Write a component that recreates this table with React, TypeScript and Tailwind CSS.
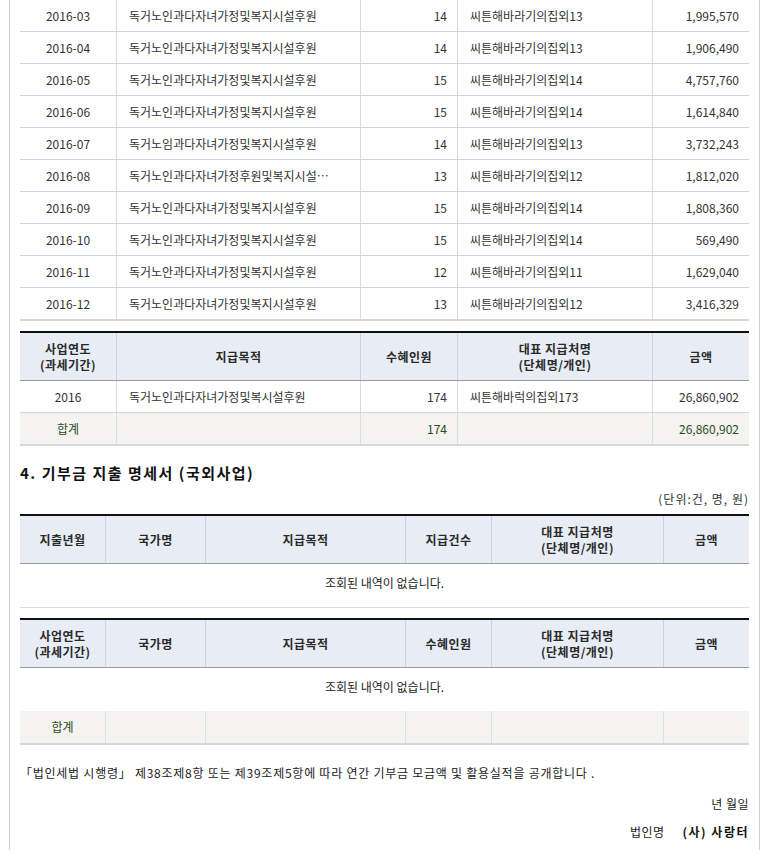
import React from "react";

const FONT = { fontFamily: '"Noto Sans CJK KR", "Noto Sans", sans-serif' };

const rows1 = [
  ["2016-03", "독거노인과다자녀가정및복지시설후원", "14", "씨튼해바라기의집외13", "1,995,570"],
  ["2016-04", "독거노인과다자녀가정및복지시설후원", "14", "씨튼해바라기의집외13", "1,906,490"],
  ["2016-05", "독거노인과다자녀가정및복지시설후원", "15", "씨튼해바라기의집외14", "4,757,760"],
  ["2016-06", "독거노인과다자녀가정및복지시설후원", "15", "씨튼해바라기의집외14", "1,614,840"],
  ["2016-07", "독거노임과다자녀가정및복지시설후원", "14", "씨튼해바라기의집외13", "3,732,243"],
  ["2016-08", "독거노인과다자녀가정후원및복지시설…", "13", "씨튼해바라기의집외12", "1,812,020"],
  ["2016-09", "독거노인과다자녀가정및복지시설후원", "15", "씨튼해바라기의집외14", "1,808,360"],
  ["2016-10", "독거노인과다자녀가정및복지시설후원", "15", "씨튼해바라기의집외14", "569,490"],
  ["2016-11", "독거노안과다자녀가정및복지시설후원", "12", "씨튼해바라기의집외11", "1,629,040"],
  ["2016-12", "독거노인과다자녀가정및복지시설후원", "13", "씨튼해바라기의집외12", "3,416,329"],
];

const G5 = "grid grid-cols-[96px_244px_97px_195px_97px]";
const G6 = "grid grid-cols-[85px_100px_200px_86px_172px_86px]";

function HeadCell({ children, first }: { children: React.ReactNode; first?: boolean }) {
  return (
    <div
      className={
        "flex items-center justify-center text-center font-bold text-[12px] leading-[16px] tracking-[0.5px] text-[#2a2a2a] " +
        (first ? "" : "border-l border-[#c9d2de]")
      }
    >
      {children}
    </div>
  );
}

function Head5() {
  return (
    <div className={G5 + " h-[50px] border-t-2 border-t-[#111] border-b border-b-[#9a9a9a] bg-[#e7ecf5]"}>
      <HeadCell first>
        사업연도
        <br />
        (과세기간)
      </HeadCell>
      <HeadCell>지급목적</HeadCell>
      <HeadCell>수혜인원</HeadCell>
      <HeadCell>
        대표 지급처명
        <br />
        (단체명/개인)
      </HeadCell>
      <HeadCell>금액</HeadCell>
    </div>
  );
}

function Head6({ first, fourth }: { first: React.ReactNode; fourth: string }) {
  return (
    <div className={G6 + " h-[50px] border-t-2 border-t-[#111] border-b border-b-[#9a9a9a] bg-[#e7ecf5]"}>
      <HeadCell first>{first}</HeadCell>
      <HeadCell>국가명</HeadCell>
      <HeadCell>지급목적</HeadCell>
      <HeadCell>{fourth}</HeadCell>
      <HeadCell>
        대표 지급처명
        <br />
        (단체명/개인)
      </HeadCell>
      <HeadCell>금액</HeadCell>
    </div>
  );
}

const cellL = "flex items-center border-l border-[#d6dce5] pl-[12px] whitespace-nowrap overflow-hidden";
const cellR = "flex items-center justify-end border-l border-[#d6dce5] pr-[10px]";
const cellC = "flex items-center justify-center";

export default function App() {
  return (
    <div className="bg-white min-h-[850px] text-[12px] leading-[16px] text-[#333]" style={FONT}>
      <div className="ml-[9px] w-[751px] border-x border-[#c9d1dc] px-[10px] pb-[10px]">
        {/* Table 1 body */}
        <div>
          {rows1.map((r, i) => (
            <div
              key={r[0]}
              className={
                G5 +
                " " +
                (i === rows1.length - 1
                  ? "h-[33px] border-b-2 border-[#d3d8de]"
                  : "h-[32px] border-b border-[#cdd6e1]")
              }
            >
              <div className={cellC}>{r[0]}</div>
              <div className={cellL}>{r[1]}</div>
              <div className={cellR}>{r[2]}</div>
              <div className={cellL + " pl-[11px]"}>{r[3]}</div>
              <div className={cellR}>{r[4]}</div>
            </div>
          ))}
        </div>

        {/* Table 2 */}
        <div className="mt-[10px]">
          <Head5 />
          <div className={G5 + " h-[32px] border-b border-[#cdd6e1]"}>
            <div className={cellC}>2016</div>
            <div className={cellL}>독거노인과다자녀가정및복시설후원</div>
            <div className={cellR}>174</div>
            <div className={cellL + " pl-[11px]"}>씨튼해바럭의집외173</div>
            <div className={cellR}>26,860,902</div>
          </div>
          <div className={G5 + " h-[33px] border-b-2 border-[#d3d8de] bg-[#f4f3ef] text-[#1f4d1f]"}>
            <div className={cellC}>합계</div>
            <div className={cellL}></div>
            <div className={cellR}>174</div>
            <div className={cellL}></div>
            <div className={cellR}>26,860,902</div>
          </div>
        </div>

        {/* Section heading */}
        <h3 className="mt-[17px] text-[15px] leading-[20px] font-bold tracking-[1.5px] text-[#111]">
          4. 기부금 지출 명세서 (국외사업)
        </h3>
        <div className="mt-[8px] text-right tracking-[1px]">(단위:건, 명, 원)</div>

        {/* Table 3 */}
        <div className="mt-[7px]">
          <Head6 first="지출년월" fourth="지급건수" />
          <div className="h-[44px] border-b border-[#dcdcdc] pt-[11px] text-center text-[#222]">
            조회된 내역이 없습니다.
          </div>
        </div>

        {/* Table 4 */}
        <div className="mt-[10px]">
          <Head6
            first={
              <>
                사업연도
                <br />
                (과세기간)
              </>
            }
            fourth="수혜인원"
          />
          <div className="h-[43px] pt-[11px] text-center text-[#222]">조회된 내역이 없습니다.</div>
          <div className={G6 + " h-[34px] border-b-2 border-[#d3d8de] bg-[#f4f3ef] text-[#1f4d1f]"}>
            <div className={cellC}>합계</div>
            <div className="border-l border-[#dde1e6]"></div>
            <div className="border-l border-[#dde1e6]"></div>
            <div className="border-l border-[#dde1e6]"></div>
            <div className="border-l border-[#dde1e6]"></div>
            <div className="border-l border-[#dde1e6]"></div>
          </div>
        </div>

        {/* Footer text */}
        <p className="mt-[20px] tracking-[0.75px] text-[#222]">
          「법인세법 시행령」 제38조제8항 또는 제39조제5항에 따라 연간 기부금 모금액 및 활용실적을 공개합니다 .
        </p>
        <div className="mt-[15px] text-right tracking-[0.5px] text-[#222]">년 월일</div>
        <div className="mt-[12px] flex justify-end gap-[18px] text-[#222]">
          <span className="tracking-[0.5px]">법인명</span>
          <span className="font-bold tracking-[1.5px] text-[#111]">(사) 사랑터</span>
        </div>
      </div>
    </div>
  );
}
